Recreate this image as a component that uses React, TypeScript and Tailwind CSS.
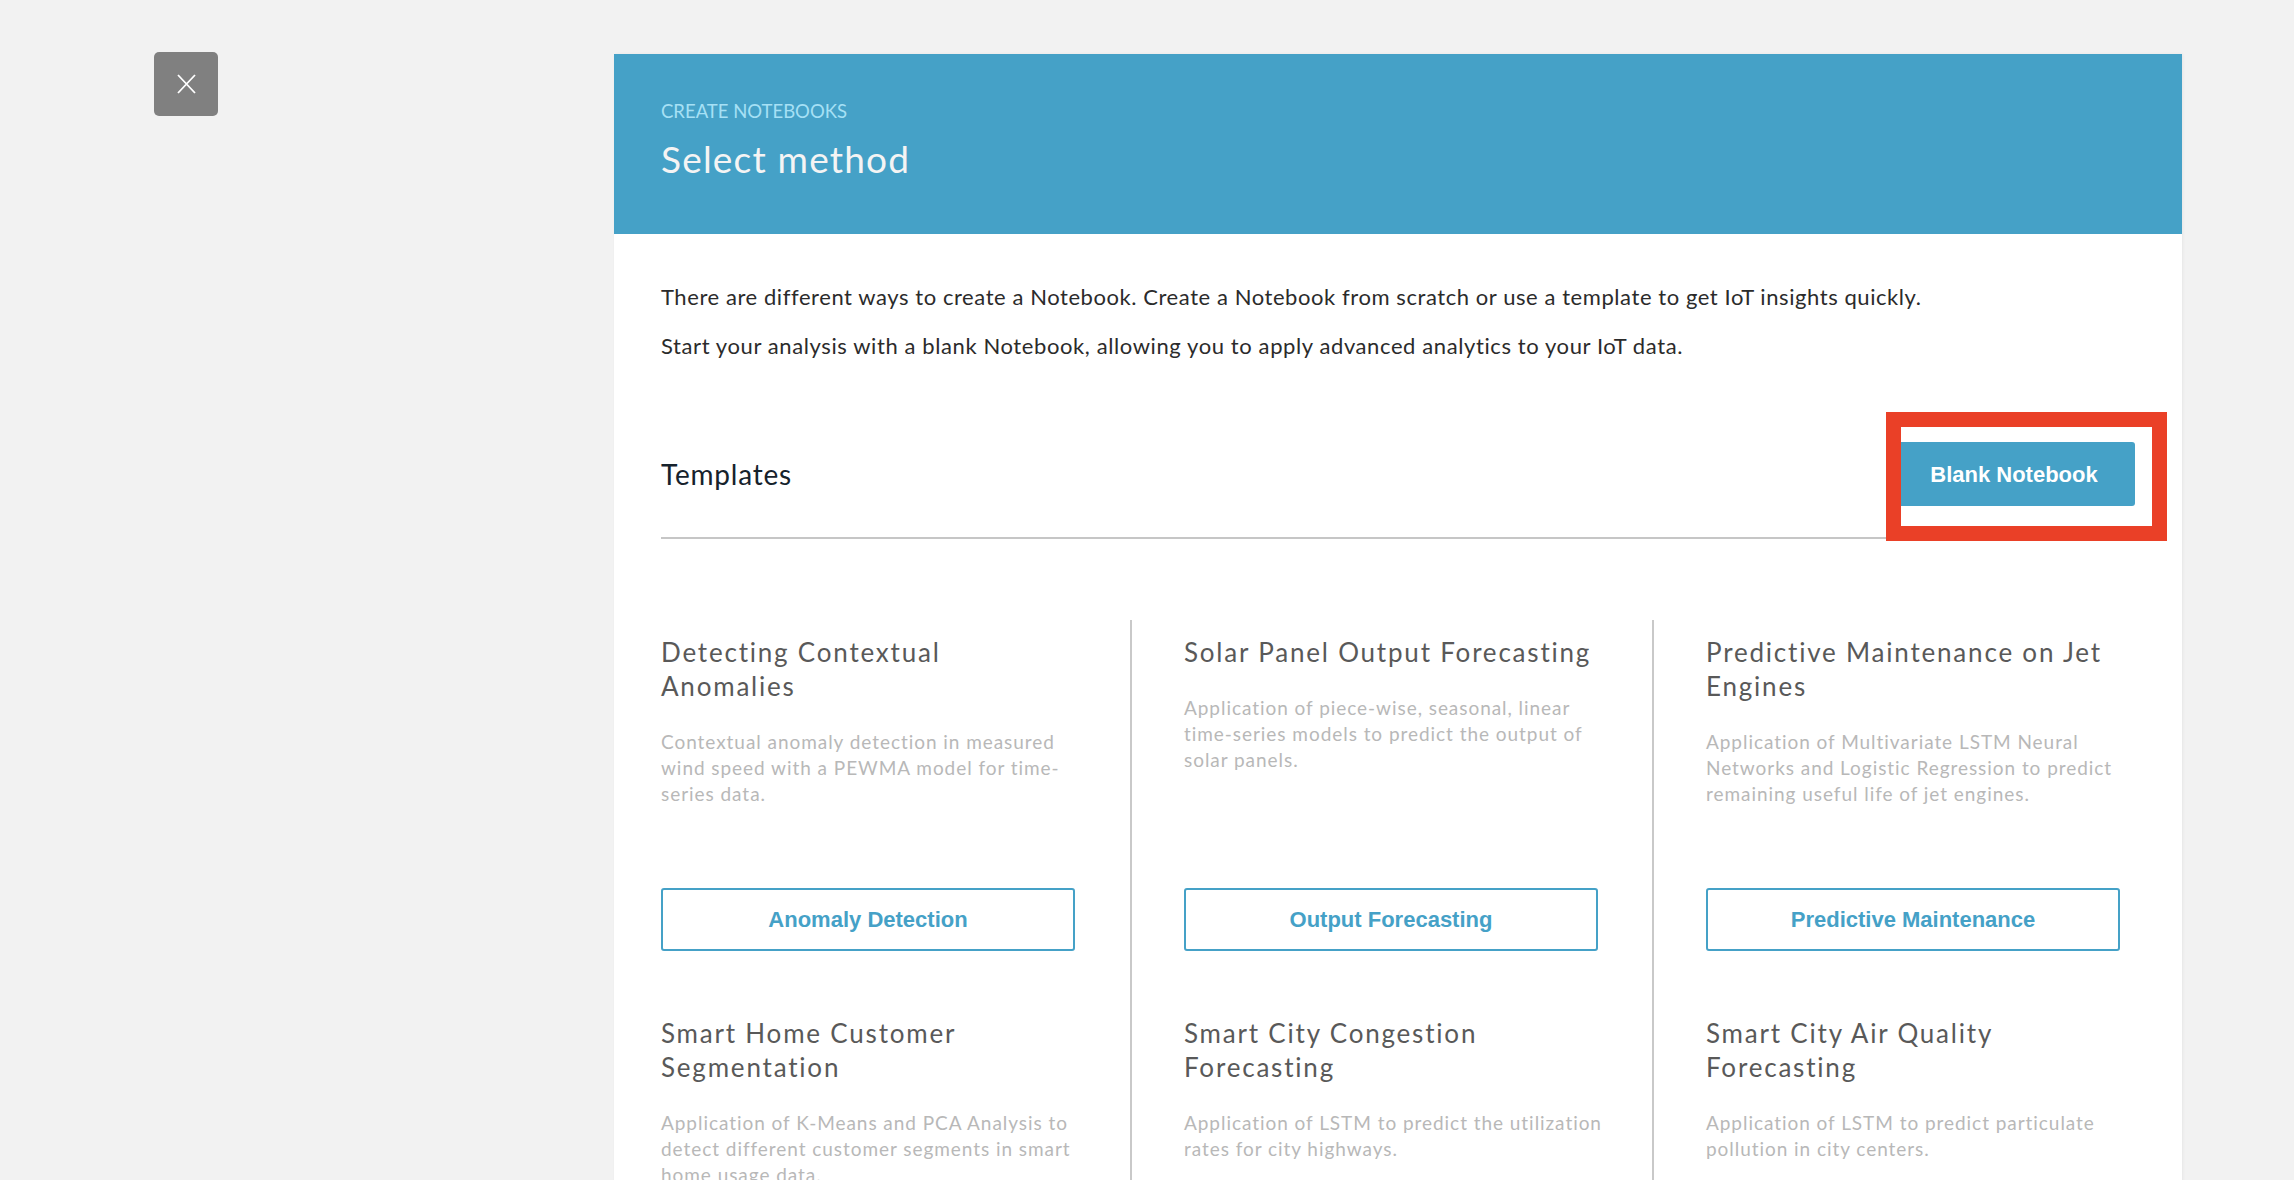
import React from "react";

type Template = {
  title: string[];
  description: string[];
  action: string;
};

const templates: Template[] = [
  {
    title: ["Detecting Contextual", "Anomalies"],
    description: [
      "Contextual anomaly detection in measured",
      "wind speed with a PEWMA model for time-",
      "series data.",
    ],
    action: "Anomaly Detection",
  },
  {
    title: ["Solar Panel Output Forecasting"],
    description: [
      "Application of piece-wise, seasonal, linear",
      "time-series models to predict the output of",
      "solar panels.",
    ],
    action: "Output Forecasting",
  },
  {
    title: ["Predictive Maintenance on Jet", "Engines"],
    description: [
      "Application of Multivariate LSTM Neural",
      "Networks and Logistic Regression to predict",
      "remaining useful life of jet engines.",
    ],
    action: "Predictive Maintenance",
  },
  {
    title: ["Smart Home Customer", "Segmentation"],
    description: [
      "Application of K-Means and PCA Analysis to",
      "detect different customer segments in smart",
      "home usage data.",
    ],
    action: "Customer Segmentation",
  },
  {
    title: ["Smart City Congestion", "Forecasting"],
    description: ["Application of LSTM to predict the utilization", "rates for city highways."],
    action: "Congestion Forecasting",
  },
  {
    title: ["Smart City Air Quality", "Forecasting"],
    description: ["Application of LSTM to predict particulate", "pollution in city centers."],
    action: "Air Quality Forecasting",
  },
];

function TemplateCard({ t }: { t: Template }) {
  return (
    <div className="flex w-[414px] flex-col pt-[15px] pb-[50px]">
      <div className="h-[253px]">
        <h3 className="text-[26px] leading-[34px] tracking-[1.8px] text-[#595959]">
          {t.title.map((line) => (
            <span key={line} className="block whitespace-nowrap">
              {line}
            </span>
          ))}
        </h3>
        <p className="mt-[26px] text-[19px] leading-[26px] tracking-[0.95px] text-[#b8b8b8]">
          {t.description.map((line) => (
            <span key={line} className="block whitespace-nowrap">
              {line}
            </span>
          ))}
        </p>
      </div>
      <button className="h-[63px] w-full rounded-[3px] border-2 border-[#45a1c7] bg-white font-['Liberation_Sans',Arial,sans-serif] text-[22px] font-bold text-[#45a1c7]">
        {t.action}
      </button>
    </div>
  );
}

export default function App() {
  const columns = [0, 1, 2].map((c) => templates.filter((_, i) => i % 3 === c));

  return (
    <div className="min-h-screen bg-[#f2f2f2] font-['Lato','Open_Sans',sans-serif]">
      <div className="flex items-start pt-[52px] pl-[154px]">
        <button className="flex h-16 w-16 items-center justify-center rounded-[5px] bg-[#808080]">
          <svg width="19" height="20" viewBox="0 0 19 20" fill="none" stroke="white" strokeWidth="1.8">
            <path d="M1 1 18 19M18 1 1 19" />
          </svg>
        </button>

        <div className="mt-[2px] ml-[396px] w-[1568px] bg-white shadow-[1px_0_3px_rgba(0,0,0,0.05)]">
          <div className="h-[180px] bg-[#45a1c7] px-[47px] pt-[45px]">
            <div className="text-[18.5px] leading-[24px] text-[#a6e0f5]">CREATE NOTEBOOKS</div>
            <h1 className="mt-[14px] text-[37px] leading-[44px] tracking-[1.2px] text-[#f4f4f4]">Select method</h1>
          </div>

          <div className="px-[47px] pt-[48px]">
            <p className="text-[22px] leading-[30px] tracking-[0.57px] text-[#2b2b2b]">
              There are different ways to create a Notebook. Create a Notebook from scratch or use a template to get IoT
              insights quickly.
            </p>
            <p className="mt-[19px] text-[22px] leading-[30px] tracking-[0.6px] text-[#2b2b2b]">
              Start your analysis with a blank Notebook, allowing you to apply advanced analytics to your IoT data.
            </p>

            <div className="mt-[81px] flex items-center justify-between border-b-2 border-[#c6c6c6] pb-[31px]">
              <h2 className="text-[28px] leading-[34px] tracking-[0.8px] text-[#16222c]">Templates</h2>
              <div className="relative">
                <button className="h-16 w-[242px] rounded-[3px] bg-[#45a1c7] font-['Liberation_Sans',Arial,sans-serif] text-[22px] font-bold text-white">
                  Blank Notebook
                </button>
                <div className="pointer-events-none absolute -top-[30px] -right-[32px] -bottom-[35px] -left-[7px] border-[15px] border-[#ea4027]" />
              </div>
            </div>

            <div className="mt-[81px] grid grid-cols-[469px_522px_1fr]">
              {columns.map((col, c) => (
                <div key={c} className={c === 0 ? "" : "border-l-2 border-[#c9c9c9] pl-[52px]"}>
                  {col.map((t) => (
                    <TemplateCard key={t.action} t={t} />
                  ))}
                </div>
              ))}
            </div>
          </div>
        </div>
      </div>
    </div>
  );
}
